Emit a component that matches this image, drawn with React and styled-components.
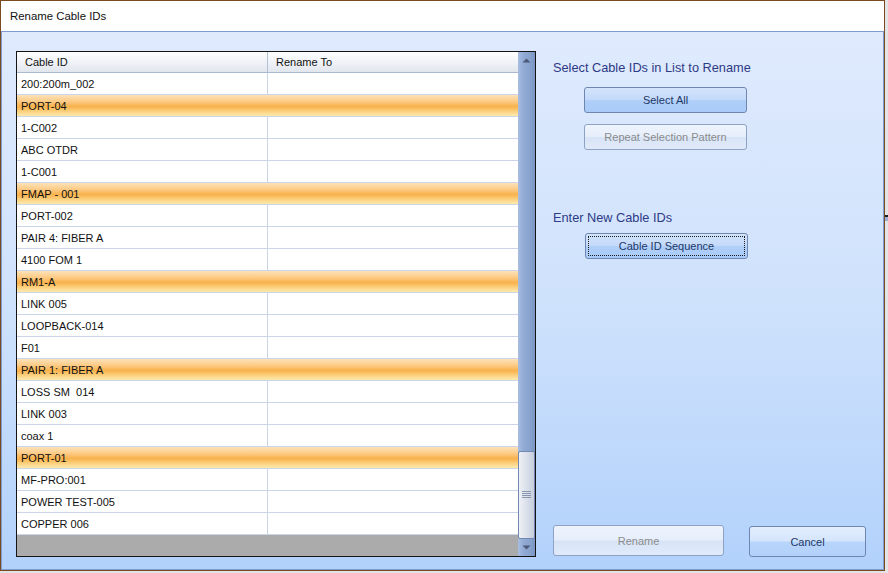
import React from 'react';
import styled, { createGlobalStyle } from 'styled-components';

const GlobalStyle = createGlobalStyle`
  html, body {
    margin: 0;
    padding: 0;
    background: #e2e2e2;
  }
  body {
    font-family: "Liberation Sans", Arial, sans-serif;
  }
`;

const Desktop = styled.div`
  display: flex;
  width: 888px;
  height: 573px;
  overflow: hidden;
`;

// a sliver of the window that sits behind the dialog
const BehindEdge = styled.div`
  flex: 1;
  background: linear-gradient(
    to bottom,
    #e4e4e4 0,
    #e4e4e4 215px,
    #1f1f1f 215px,
    #1f1f1f 217px,
    #9db2d2 217px,
    #9db2d2 221px,
    #e4e4e4 221px
  );
`;

const Window = styled.div`
  width: 885px;
  height: 571px;
  box-sizing: border-box;
  border: 1px solid #7a4b22;
  background: #fff;
  display: flex;
  flex-direction: column;
`;

const TitleBar = styled.div`
  height: 30px;
  flex: none;
  display: flex;
  align-items: center;
  padding-left: 9px;
  font-size: 11.4px;
  color: #111;
`;

const Client = styled.div`
  flex: 1;
  display: flex;
  gap: 17px;
  border: 1px solid #7f9dcc;
  padding: 19px 16px 12px 14px;
  background: linear-gradient(to bottom, #dfeafd 0%, #cfe2fc 50%, #b2d1fb 100%);
`;

const Grid = styled.div`
  width: 520px;
  height: 506px;
  box-sizing: border-box;
  border: 1px solid #141414;
  display: flex;
  flex: none;
`;

const Table = styled.div`
  flex: 1;
  display: flex;
  flex-direction: column;
  background: #ababab;
`;

const HeaderRow = styled.div`
  display: grid;
  grid-template-columns: 251px 1fr;
  height: 21px;
  box-sizing: border-box;
  border-bottom: 1px solid #a9b9d0;
  background: linear-gradient(to bottom, #ffffff 0%, #f2f4f8 45%, #e1e6ee 100%);
  font-size: 11px;
  color: #111;
`;

const HeaderCell = styled.div`
  display: flex;
  align-items: center;
  padding-left: 8px;
  box-sizing: border-box;
  border-right: ${p => (p.$last ? 'none' : '1px solid #b4c2d6')};
`;

const Row = styled.div`
  display: grid;
  grid-template-columns: 251px 1fr;
  height: 22px;
  box-sizing: border-box;
  border-bottom: 1px solid #cad6e8;
  font-size: 11px;
  color: #111;
  background: ${p =>
    p.$group
      ? 'linear-gradient(to bottom, #fde2ba 0%, #fccb86 30%, #f9b24c 55%, #fcd383 80%, #feeaae 100%)'
      : '#fff'};
`;

const Cell = styled.div`
  display: flex;
  align-items: center;
  padding-left: 4px;
  box-sizing: border-box;
  white-space: pre;
  border-right: ${p => (p.$first && !p.$group ? '1px solid #cad6e8' : 'none')};
`;

const ScrollBar = styled.div`
  width: 17px;
  flex: none;
  display: flex;
  flex-direction: column;
  background: linear-gradient(to right, #a9bde0 0%, #93acd6 30%, #86a1cc 75%, #7a95c2 100%);
`;

const ScrollArrow = styled.div`
  height: 17px;
  flex: none;
  display: flex;
  align-items: center;
  justify-content: center;
`;

const Track = styled.div`
  flex: 1;
  display: flex;
  flex-direction: column;
  justify-content: flex-end;
`;

const Thumb = styled.div`
  height: 88px;
  box-sizing: border-box;
  border: 1px solid #7388b0;
  border-radius: 2px;
  background: linear-gradient(to right, #eef1f6 0%, #dde2eb 45%, #c6cedd 100%);
  display: flex;
  align-items: center;
  justify-content: center;
`;

const Side = styled.div`
  flex: 1;
  display: flex;
  flex-direction: column;
`;

const Label = styled.div`
  font-size: 12.75px;
  line-height: 15px;
  color: #2d3a86;
  margin-top: ${p => p.$top}px;
`;

const Button = styled.div`
  box-sizing: border-box;
  width: ${p => p.$w}px;
  height: ${p => p.$h || 26}px;
  margin-top: ${p => p.$top || 0}px;
  margin-left: ${p => p.$left || 0}px;
  border: 1px solid ${p => (p.$disabled ? '#8ea2c4' : '#6f87b0')};
  border-radius: 3px;
  display: flex;
  align-items: center;
  justify-content: center;
  position: relative;
  font-size: 11px;
  color: ${p => (p.$disabled ? '#8b8b8b' : '#1d3766')};
  background: ${p =>
    p.$disabled
      ? 'linear-gradient(to bottom, #eef4fd 0%, #e6eefb 48%, #d8e4f6 52%, #e0eafa 100%)'
      : p.$strong
      ? 'linear-gradient(to bottom, #d3e4fb 0%, #c4dafa 48%, #b0cff9 52%, #a9cbf9 100%)'
      : 'linear-gradient(to bottom, #e3eefd 0%, #d4e5fc 48%, #b8d5fb 52%, #b2d1fa 100%)'};
`;

const FocusRing = styled.span`
  position: absolute;
  inset: 2px;
  border: 1px dotted #1a1a1a;
  pointer-events: none;
`;

const BottomRow = styled.div`
  margin-top: auto;
  display: flex;
  gap: 25px;
  align-items: flex-start;
  margin-bottom: 0;
`;

const Triangle = ({ up }) => (
  <svg width="9" height="5" viewBox="0 0 9 5">
    <path d={up ? 'M0.5 4.5 L4.5 0.5 L8.5 4.5 Z' : 'M0.5 0.5 L8.5 0.5 L4.5 4.5 Z'} fill="#4c5a78" />
  </svg>
);

const Grip = () => (
  <svg width="9" height="8" viewBox="0 0 9 8">
    {[0.5, 2.5, 4.5, 6.5].map(y => (
      <line key={y} x1="0" x2="9" y1={y} y2={y} stroke="#8a96ad" strokeWidth="1" />
    ))}
  </svg>
);

const cables = [
  ['200:200m_002'],
  ['PORT-04', true],
  ['1-C002'],
  ['ABC OTDR'],
  ['1-C001'],
  ['FMAP - 001', true],
  ['PORT-002'],
  ['PAIR 4: FIBER A'],
  ['4100 FOM 1'],
  ['RM1-A', true],
  ['LINK 005'],
  ['LOOPBACK-014'],
  ['F01'],
  ['PAIR 1: FIBER A', true],
  ['LOSS SM  014'],
  ['LINK 003'],
  ['coax 1'],
  ['PORT-01', true],
  ['MF-PRO:001'],
  ['POWER TEST-005'],
  ['COPPER 006'],
];

export default function App() {
  return (
    <>
      <GlobalStyle />
      <Desktop>
        <Window>
          <TitleBar>Rename Cable IDs</TitleBar>
          <Client>
            <Grid>
              <Table>
                <HeaderRow>
                  <HeaderCell>Cable ID</HeaderCell>
                  <HeaderCell $last>Rename To</HeaderCell>
                </HeaderRow>
                {cables.map(([name, group], i) => (
                  <Row key={i} $group={group}>
                    <Cell $first $group={group}>{name}</Cell>
                    <Cell $group={group} />
                  </Row>
                ))}
              </Table>
              <ScrollBar>
                <ScrollArrow><Triangle up /></ScrollArrow>
                <Track>
                  <Thumb><Grip /></Thumb>
                </Track>
                <ScrollArrow><Triangle /></ScrollArrow>
              </ScrollBar>
            </Grid>
            <Side>
              <Label $top={9}>Select Cable IDs in List to Rename</Label>
              <Button $w={163} $top={12} $left={31} $strong>Select All</Button>
              <Button $w={163} $top={11} $left={31} $disabled>Repeat Selection Pattern</Button>
              <Label $top={60}>Enter New Cable IDs</Label>
              <Button $w={163} $top={8} $left={32} $strong>
                Cable ID Sequence
                <FocusRing />
              </Button>
              <BottomRow>
                <Button $w={171} $h={31} $disabled>Rename</Button>
                <Button $w={117} $h={31} $top={1}>Cancel</Button>
              </BottomRow>
            </Side>
          </Client>
        </Window>
        <BehindEdge />
      </Desktop>
    </>
  );
}
